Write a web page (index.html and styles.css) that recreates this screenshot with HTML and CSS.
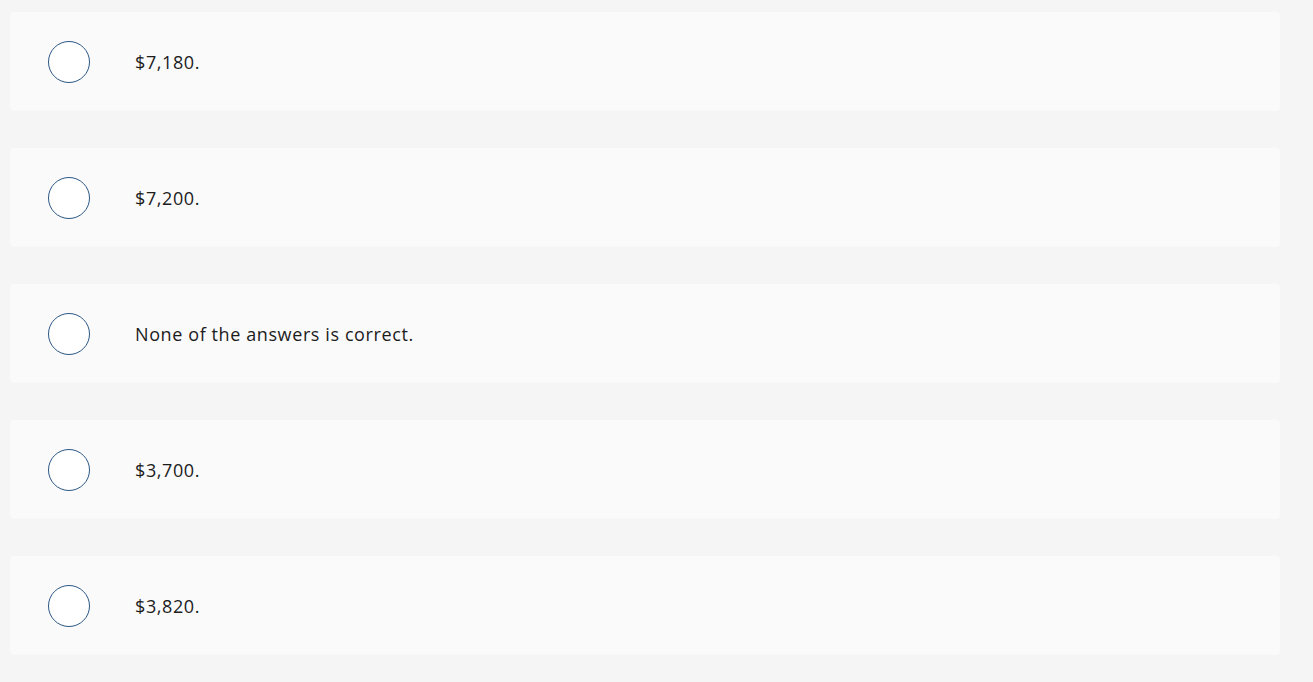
FILE: index.html
```html
<!DOCTYPE html>
<html>
<head>
<meta charset="utf-8">
<link rel="stylesheet" href="styles.css">
</head>
<body>
<div class="list">
  <label class="option"><span class="radio"></span><span class="text">$7,180.</span></label>
  <label class="option"><span class="radio"></span><span class="text">$7,200.</span></label>
  <label class="option"><span class="radio"></span><span class="text">None of the answers is correct.</span></label>
  <label class="option"><span class="radio"></span><span class="text">$3,700.</span></label>
  <label class="option"><span class="radio"></span><span class="text">$3,820.</span></label>
</div>
</body>
</html>
```
FILE: styles.css
```css
html, body {
  margin: 0;
  padding: 0;
  background: #f5f5f5;
}
body {
  font-family: "Open Sans", "Liberation Sans", sans-serif;
  color: #1c1c1c;
}
.list {
  display: flex;
  flex-direction: column;
  gap: 37px;
  padding: 12px 33px 0 10px;
}
.option {
  display: flex;
  align-items: center;
  height: 99px;
  box-sizing: border-box;
  padding-left: 38px;
  background: #fafafa;
  border-radius: 4px;
}
.radio {
  width: 42px;
  height: 42px;
  box-sizing: border-box;
  border: 1px solid #2b5887;
  border-radius: 50%;
  background: #ffffff;
  flex: none;
}
.text {
  margin-left: 45px;
  font-size: 18px;
  letter-spacing: 0.6px;
}
```
